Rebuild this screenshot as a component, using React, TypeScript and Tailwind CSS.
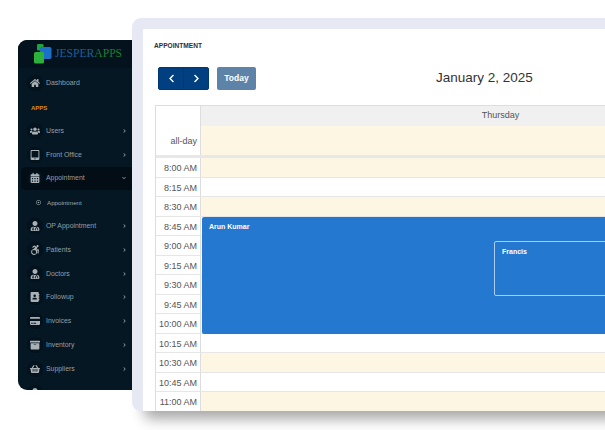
import React from "react";
import { FaHome, FaUsers, FaCalendarAlt, FaUserMd, FaAccessibleIcon, FaAddressBook, FaCreditCard, FaArchive, FaShoppingBasket, FaTabletAlt, FaChevronLeft, FaChevronRight, FaChevronDown, FaRegDotCircle } from "react-icons/fa";

const sans = "font-['Liberation_Sans',Arial,sans-serif]";

type IconT = React.ComponentType<{ className?: string }>;

const items: [string, IconT][] = [
  ["OP Appointment", FaUserMd],
  ["Patients", FaAccessibleIcon],
  ["Doctors", FaUserMd],
  ["Followup", FaAddressBook],
  ["Invoices", FaCreditCard],
  ["Inventory", FaArchive],
  ["Suppliers", FaShoppingBasket],
];

const times = ["8:00 AM","8:15 AM","8:30 AM","8:45 AM","9:00 AM","9:15 AM","9:30 AM","9:45 AM","10:00 AM","10:15 AM","10:30 AM","10:45 AM","11:00 AM"];

function Item({ label, Icon, open, active }: { label: string; Icon: IconT; open?: boolean; active?: boolean }) {
  return (
    <div className={`flex h-[23.8px] items-center pr-[6px] ${active ? "bg-[#020d15] rounded-l-[5px] ml-[3px] pl-[6px]" : "pl-[9px]"}`}>
      <span className="w-[16px] h-[16px] rounded-full bg-[#03121c] flex items-center justify-center shrink-0"><Icon className="w-[10px] h-[10px] text-[#a9b1b6]" /></span>
      <span className="ml-[3px] text-[6.9px] text-[#979fa4] flex-1">{label}</span>
      {open ? <FaChevronDown className="w-[4px] h-[4px] text-[#9aa3a9]" /> : <FaChevronRight className="w-[3px] h-[4px] text-[#9aa3a9]" />}
    </div>
  );
}

export default function App() {
  return (
    <div className={`${sans} w-[605px] h-[430px] overflow-hidden bg-white flex items-start`}>
      <aside className="mt-[40px] ml-[18px] w-[114px] h-[350px] shrink-0 bg-[#041723] rounded-l-[9px] overflow-hidden">
        <div className="h-[28px] bg-[#03121c] flex items-center pl-[16px]">
          <svg width="18" height="20" viewBox="0 0 18 20" className="shrink-0">
            <rect x="3" y="0" width="6.5" height="6.5" rx="1.2" fill="#22a33a" />
            <rect x="6" y="3" width="11.5" height="12" rx="1.8" fill="#1c70c8" />
            <rect x="0" y="8" width="10" height="11.5" rx="1.5" fill="#2bb13c" />
          </svg>
          <span className="ml-[3px] font-['Liberation_Serif',serif] text-[11.6px] leading-none text-[#1a5f9f]">JESPER<span className="text-[#17802d]">APPS</span></span>
        </div>
        <div className="flex h-[28px] mt-[1px] items-center pl-[9px] pr-[6px]">
          <span className="w-[16px] h-[16px] rounded-full bg-[#03121c] flex items-center justify-center"><FaHome className="w-[10px] h-[10px] text-[#a9b1b6]" /></span>
          <span className="ml-[3px] text-[6.9px] text-[#979fa4]">Dashboard</span>
        </div>
        <div className="pl-[13px] h-[22px] flex items-center text-[6px] font-bold text-[#e08a12]">APPS</div>
        <div className="flex flex-col">
          <Item label="Users" Icon={FaUsers} />
          <Item label="Front Office" Icon={FaTabletAlt} />
          <Item label="Appointment" Icon={FaCalendarAlt} open active />
          <div className="h-[23.8px] flex items-center pl-[18px]">
            <FaRegDotCircle className="w-[5px] h-[5px] text-[#a9b1b6]" />
            <span className="ml-[6px] text-[6.2px] text-[#a0a8ad]">Appointment</span>
          </div>
          {items.map(([l, I]) => <Item key={l} label={l} Icon={I} />)}
          <div className="h-[23.8px] pl-[9px] flex pt-[4px]"><span className="w-[16px] h-[16px] rounded-full bg-[#03121c] flex justify-center items-center"><FaUserMd className="w-[10px] h-[10px] text-[#a9b1b6]" /></span></div>
        </div>
      </aside>

      <main className="mt-[18px] w-[700px] h-[393px] shrink-0 bg-[#e6e9f3] rounded-l-[9px] pl-[11px] pt-[11px] shadow-[10px_10px_14px_-2px_rgba(0,0,0,0.35)]">
        <div className="bg-white h-[382px] pl-[11px] pt-[12px] overflow-hidden">
          <div className="text-[6.6px] font-bold text-[#2c2f33] leading-[9px]">APPOINTMENT</div>
          <div className="mt-[17px] h-[23px] flex items-center">
            <div className="flex w-[51px] h-[23px] ml-[4px] bg-[#004080] rounded-[2px] border border-[#00386f] text-white">
              <span className="flex-1 flex items-center justify-center border-r border-[#00366c]"><FaChevronLeft className="w-[7px] h-[9px]" /></span>
              <span className="flex-1 flex items-center justify-center"><FaChevronRight className="w-[7px] h-[9px]" /></span>
            </div>
            <div className="ml-[8px] w-[39px] h-[23px] bg-[#5d83a9] rounded-[2px] flex items-center justify-center text-white text-[8.5px] font-bold">Today</div>
            <div className="ml-[180px] text-[13.5px] text-[#333]">January 2, 2025</div>
          </div>

          <div className="mt-[15px] ml-[1px] w-[646px] border border-[#ddd] border-b-0 text-[#555]">
            <div className="flex h-[49px]">
              <div className="w-[45px] border-r border-[#ddd] flex items-end justify-end pr-[3px] pb-[3px] text-[9px] leading-[21px]">all-day</div>
              <div className="flex-1 flex flex-col">
                <div className="h-[20px] bg-[#f0f0f0] text-[9px] flex items-center justify-center">Thursday</div>
                <div className="flex-1 bg-[#fcf6e3]"></div>
              </div>
            </div>
            <div className="h-[3px] bg-[#e8e8e8]"></div>
            <div className="relative">
              {times.map((t, i) => (
                <div key={t} className="flex h-[19.5px] border-b border-[#e6e6e6]">
                  <div className="w-[45px] border-r border-[#ddd] text-right pr-[3px] text-[9px] leading-[21.5px]">{t}</div>
                  <div className={`flex-1 ${i % 2 === 0 ? "bg-[#fcf6e3]" : "bg-white"}`}></div>
                </div>
              ))}
              <div className="absolute left-[46px] right-0 top-[59px] h-[117px] bg-[#2478cf] rounded-l-[2px] text-white font-bold text-[7px] pl-[7px] pt-[5px]">
                Arun Kumar
                <div className="absolute left-[292px] right-[40px] top-[24px] h-[55px] border border-[#a9cdf0] rounded-[2px] pl-[7px] pt-[5px]">Francis</div>
              </div>
            </div>
          </div>
        </div>
      </main>
    </div>
  );
}
